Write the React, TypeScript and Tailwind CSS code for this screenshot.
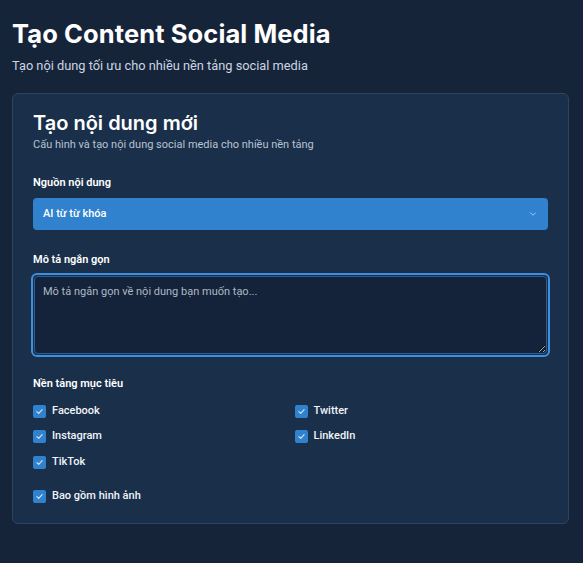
import React from "react";

const Check = () => (
  <span className="flex h-[13px] w-[13px] items-center justify-center rounded-[2px] bg-[#3182ce]">
    <svg width="9" height="9" viewBox="0 0 12 12" fill="none">
      <path d="M2.5 6.2 L5 8.5 L9.5 3.5" stroke="#dbe8f7" strokeWidth="1.4" strokeLinecap="round" strokeLinejoin="round" />
    </svg>
  </span>
);

const Item = ({ label }: { label: string }) => (
  <label className="flex items-center gap-[6px] h-[16px]">
    <Check />
    <span className="text-[11px] font-medium text-[#f0f4f8]">{label}</span>
  </label>
);

export default function App() {
  return (
    <div className="min-h-[563px] w-full bg-[#16243a] px-3 pt-[18px] pb-10" style={{ fontFamily: "Roboto, 'Noto Sans', sans-serif" }}>
      <h1 className="text-[25.5px] font-bold leading-[32px] text-white tracking-[0.1px]" style={{ fontFamily: "Inter, 'Noto Sans', sans-serif" }}>
        Tạo Content Social Media
      </h1>
      <p className="mt-[8px] text-[12.8px] leading-[16px] text-[#cbd5e0]">Tạo nội dung tối ưu cho nhiều nền tảng social media</p>

      <div className="mt-[19px] w-[557px] rounded-[6px] border border-[#2c4463] bg-[#1a2f4a] px-[20px] pt-[17px] pb-[19px]">
        <h2 className="text-[20px] font-semibold leading-[24px] text-white" style={{ fontFamily: "Inter, 'Noto Sans', sans-serif" }}>
          Tạo nội dung mới
        </h2>
        <p className="mt-[3px] text-[11px] leading-[14px] text-[#b8c4d2]">Cấu hình và tạo nội dung social media cho nhiều nền tảng</p>

        <div className="mt-[24px] text-[11px] font-semibold leading-[14px] text-white">Nguồn nội dung</div>
        <div className="mt-[8px] flex h-[32px] items-center justify-between rounded-[4px] bg-[#3182ce] px-[10px]">
          <span className="text-[11px] font-medium text-white">AI từ từ khóa</span>
          <svg width="10" height="10" viewBox="0 0 12 12" fill="none">
            <path d="M3 4.5 L6 7.5 L9 4.5" stroke="#a9c8ea" strokeWidth="1.2" strokeLinecap="round" strokeLinejoin="round" />
          </svg>
        </div>

        <div className="mt-[23px] text-[11px] font-semibold leading-[14px] text-white">Mô tả ngắn gọn</div>
        <div className="mt-[6px] -mx-[2px] rounded-[6px] border-2 border-[#3d8fe0] p-[1px]">
          <textarea
            className="block h-[78px] w-full resize-y rounded-[4px] border border-[#2b5e93] bg-[#14233a] px-[8px] py-[7px] text-[11px] text-[#c4ccd6] placeholder-[#aeb8c4] outline-none"
            placeholder="Mô tả ngắn gọn về nội dung bạn muốn tạo..."
          />
        </div>

        <div className="mt-[20px] text-[11px] font-semibold leading-[14px] text-white">Nền tảng mục tiêu</div>
        <div className="mt-[12px] grid grid-cols-2 gap-x-2 gap-y-[9.5px]">
          <Item label="Facebook" />
          <Item label="Twitter" />
          <Item label="Instagram" />
          <Item label="LinkedIn" />
          <Item label="TikTok" />
        </div>
        <div className="mt-[18px]">
          <Item label="Bao gồm hình ảnh" />
        </div>
      </div>
    </div>
  );
}
